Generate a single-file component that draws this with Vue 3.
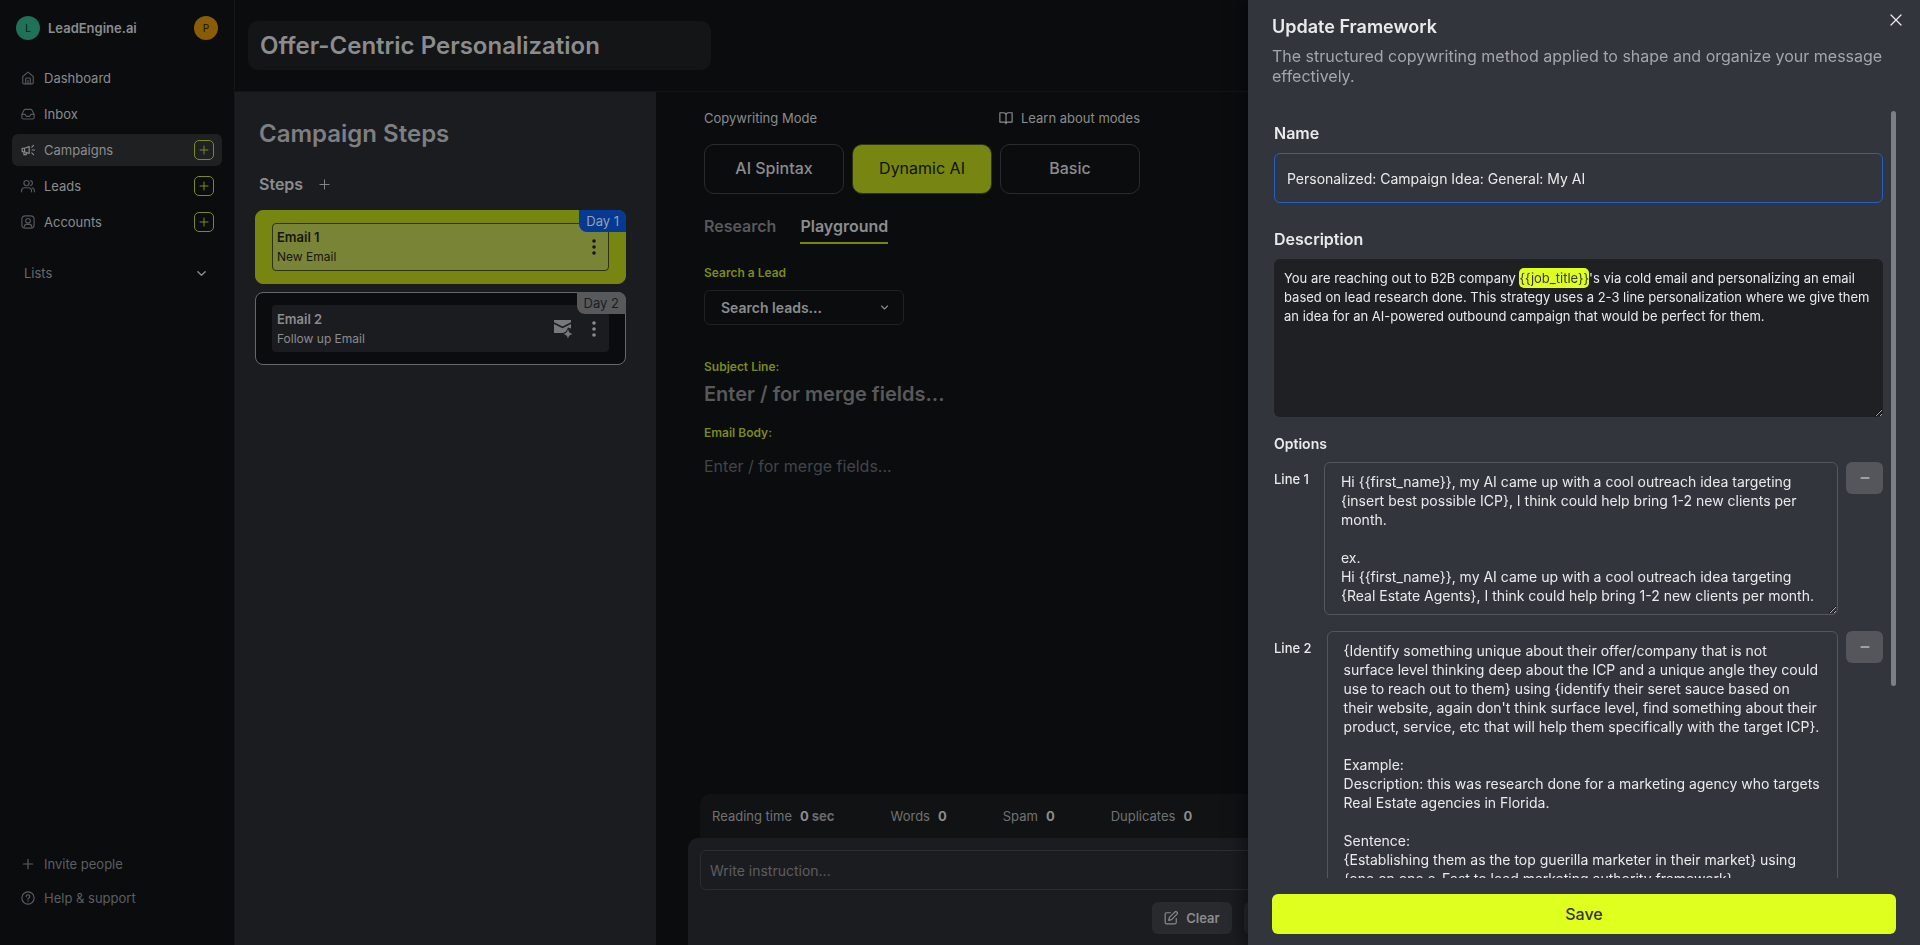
<script setup>
import { ref, computed } from 'vue'

const navItems = [
  { label: 'Dashboard', icon: 'home' },
  { label: 'Inbox', icon: 'inbox' },
  { label: 'Campaigns', icon: 'megaphone', active: true, add: true },
  { label: 'Leads', icon: 'users', add: true },
  { label: 'Accounts', icon: 'account', add: true },
]

const modes = ['AI Spintax', 'Dynamic AI', 'Basic']
const activeMode = ref('Dynamic AI')

const tabs = ['Research', 'Playground']
const activeTab = ref('Playground')

const stats = [
  { label: 'Reading time', value: '0', unit: 'sec' },
  { label: 'Words', value: '0' },
  { label: 'Spam', value: '0' },
  { label: 'Duplicates', value: '0' },
]

const title = ref('Offer-Centric Personalization')
const name = ref('Personalized: Campaign Idea: General: My AI')
const description = ref(
  "You are reaching out to B2B company {{job_title}}'s via cold email and personalizing an email based on lead research done. This strategy uses a 2-3 line personalization where we give them an idea for an AI-powered outbound campaign that would be perfect for them."
)

// merge fields are split out so they can be highlighted
const descriptionParts = computed(() => description.value.split(/(\{\{\w+\}\})/))
const isField = (part) => part.startsWith('{{')

const lines = ref([
  {
    rows: 7,
    text: `Hi {{first_name}}, my AI came up with a cool outreach idea targeting {insert best possible ICP}, I think could help bring 1-2 new clients per month.

ex.
Hi {{first_name}}, my AI came up with a cool outreach idea targeting {Real Estate Agents}, I think could help bring 1-2 new clients per month.`,
  },
  {
    rows: 18,
    text: `{Identify something unique about their offer/company that is not
surface level thinking deep about the ICP and a unique angle they could use to reach out to them} using {identify their seret sauce based on their website, again don't think surface level, find something about their product, service, etc that will help them specifically with the target ICP}.

Example:
Description: this was research done for a marketing agency who targets Real Estate agencies in Florida.

Sentence:
{Establishing them as the top guerilla marketer in their market} using
{one on one e-Fast to lead marketing authority framework}`,
  },
])

const removeLine = (index) => {
  lines.value.splice(index, 1)
}
</script>

<template>
  <div class="app">
    <aside class="sidebar">
      <div class="sidebar__top">
        <span class="avatar avatar--green">L</span>
        <span class="sidebar__brand">LeadEngine.ai</span>
        <span class="avatar avatar--amber">P</span>
      </div>

      <nav class="sidebar__nav">
        <div
          v-for="item in navItems"
          :key="item.label"
          class="nav-item"
          :class="{ 'nav-item--active': item.active }"
        >
          <a href="#" class="nav-item__link">
            <svg class="icon" viewBox="0 0 24 24" aria-hidden="true">
              <template v-if="item.icon === 'home'">
                <path d="M3 9.500 12 2l9 7.500V20a2 2 0 0 1-2 2H5a2 2 0 0 1-2-2z" />
                <path d="M8 22v-8.500A1.500 1.500 0 0 1 9.500 12h5a1.500 1.500 0 0 1 1.500 1.500V22M12 16v6" />
              </template>
              <template v-else-if="item.icon === 'inbox'">
                <path d="M1.500 13 5 5.500A2.500 2.500 0 0 1 7.200 4h9.600A2.500 2.500 0 0 1 19 5.500l3.500 7.500v5a2.500 2.500 0 0 1-2.500 2.500H4A2.500 2.500 0 0 1 1.500 18z" />
                <path d="M1.500 12.500H7l2 3.500h6l2-3.500h5.500" />
              </template>
              <template v-else-if="item.icon === 'megaphone'">
                <path d="M2 9v6h4l8 3V6L6 9zM5 15v5h4v-3.500M6 9v6" />
                <path d="M19 12h4M18.500 7l3-3M18.500 17l3 3" />
              </template>
              <template v-else-if="item.icon === 'users'">
                <circle cx="9.500" cy="7" r="4.500" />
                <path d="M1 22v-2a5 5 0 0 1 5-5h7a5 5 0 0 1 5 5v2M16.500 2.700a4.500 4.500 0 0 1 0 8.600M23 22v-2a5 5 0 0 0-3.500-4.700" />
              </template>
              <template v-else>
                <rect x="1.500" y="1.500" width="21" height="21" rx="6" />
                <circle cx="12" cy="10" r="4" />
                <path d="M5.500 21v-1a4 4 0 0 1 4-4h5a4 4 0 0 1 4 4v1" />
              </template>
            </svg>
            {{ item.label }}
          </a>
          <button v-if="item.add" type="button" class="nav-item__add" :aria-label="`Add ${item.label}`">
            <svg viewBox="0 0 24 24" class="icon icon--plus" aria-hidden="true"><path d="M12 4v16M4 12h16" /></svg>
          </button>
        </div>
      </nav>

      <button type="button" class="sidebar__lists">
        Lists
        <svg class="icon icon--chevron" viewBox="0 0 24 24" aria-hidden="true"><path d="m4 8 8 8 8-8" /></svg>
      </button>

      <div class="sidebar__bottom">
        <a href="#" class="sidebar__util">
          <svg class="icon" viewBox="0 0 24 24" aria-hidden="true"><path d="M12 4v16M4 12h16" /></svg>
          Invite people
        </a>
        <a href="#" class="sidebar__util">
          <svg class="icon" viewBox="0 0 24 24" aria-hidden="true">
            <circle cx="12" cy="12" r="10.500" />
            <path d="M9 9.500a3 3 0 1 1 4.500 2.600c-1 .6-1.500 1-1.500 2M12 17v.5" />
          </svg>
          Help &amp; support
        </a>
      </div>
    </aside>

    <div class="main">
      <header class="main__header">
        <input v-model="title" class="title-input" aria-label="Campaign title" />
      </header>

      <div class="main__body">
        <section class="steps">
          <h1 class="steps__title">Campaign Steps</h1>
          <div class="steps__sub">
            <h2>Steps</h2>
            <button type="button" aria-label="Add step">
              <svg class="icon" viewBox="0 0 24 24" aria-hidden="true"><path d="M12 2v20M2 12h20" /></svg>
            </button>
          </div>

          <article class="step step--active">
            <div class="step__inner">
              <div class="step__text">
                <strong>Email 1</strong>
                <span>New Email</span>
              </div>
              <button type="button" class="step__more" aria-label="Email 1 menu">
                <svg viewBox="0 0 4 16" aria-hidden="true"><circle cx="2" cy="2" r="1.800" /><circle cx="2" cy="8" r="1.800" /><circle cx="2" cy="14" r="1.800" /></svg>
              </button>
            </div>
            <span class="step__day">Day 1</span>
          </article>

          <article class="step">
            <div class="step__inner">
              <div class="step__text">
                <strong>Email 2</strong>
                <span>Follow up Email</span>
              </div>
              <svg class="step__mail" viewBox="0 0 20 20" aria-hidden="true">
                <path d="M1 1h17v2.200L9.500 7.500 1 3.200z" />
                <path d="M1 5l8.500 4.300L18 5v4.500l-3-1-2 4-3 1.500H1z" />
                <path d="M15 10c.8 3.200 1.700 4.200 4.800 5-3.100.8-4 1.700-4.800 4.800-.8-3.100-1.700-4-4.800-4.800 3.100-.8 4-1.800 4.800-5z" />
              </svg>
              <button type="button" class="step__more" aria-label="Email 2 menu">
                <svg viewBox="0 0 4 16" aria-hidden="true"><circle cx="2" cy="2" r="1.800" /><circle cx="2" cy="8" r="1.800" /><circle cx="2" cy="14" r="1.800" /></svg>
              </button>
            </div>
            <span class="step__day">Day 2</span>
          </article>
        </section>

        <section class="editor">
          <div class="editor__content">
            <div class="editor__modes">
              <div class="editor__row">
                <span>Copywriting Mode</span>
                <a href="#" class="editor__learn">
                  <svg class="icon" viewBox="0 0 24 24" aria-hidden="true">
                    <path d="M1.500 3H8a4 4 0 0 1 4 4v15a3 3 0 0 0-3-3H1.500zM22.500 3H16a4 4 0 0 0-4 4v15a3 3 0 0 1 3-3h7.500z" />
                  </svg>
                  Learn about modes
                </a>
              </div>
              <div class="mode-list">
                <button
                  v-for="mode in modes"
                  :key="mode"
                  type="button"
                  class="mode"
                  :class="{ 'mode--active': mode === activeMode }"
                  @click="activeMode = mode"
                >
                  {{ mode }}
                </button>
              </div>
            </div>

            <div class="tabs">
              <button
                v-for="tab in tabs"
                :key="tab"
                type="button"
                class="tab"
                :class="{ 'tab--active': tab === activeTab }"
                @click="activeTab = tab"
              >
                {{ tab }}
              </button>
            </div>

            <label class="field-label" for="lead">Search a Lead</label>
            <div class="lead-select">
              <select id="lead">
                <option>Search leads...</option>
              </select>
              <svg class="icon" viewBox="0 0 24 24" aria-hidden="true"><path d="m4 8 8 8 8-8" /></svg>
            </div>

            <label class="field-label" for="subject">Subject Line:</label>
            <input id="subject" class="subject" placeholder="Enter / for merge fields..." />
            <label class="field-label" for="email-body">Email Body:</label>
            <textarea id="email-body" class="email-body" placeholder="Enter / for merge fields..."></textarea>
          </div>

          <div class="composer-wrap">
            <dl class="stats">
              <div v-for="stat in stats" :key="stat.label" class="stat">
                <dt>{{ stat.label }}</dt>
                <dd>{{ stat.value }} <span v-if="stat.unit">{{ stat.unit }}</span></dd>
              </div>
            </dl>
            <div class="composer">
              <input class="composer__input" placeholder="Write instruction..." aria-label="Instruction" />
              <div class="composer__actions">
                <button type="button" class="composer__btn">
                  <svg class="icon" viewBox="0 0 24 24" aria-hidden="true">
                    <path d="M11 3H4.500A2.500 2.500 0 0 0 2 5.500v14A2.500 2.500 0 0 0 4.500 22h14a2.500 2.500 0 0 0 2.500-2.500V13" />
                    <path d="M18.500 1.800a2.600 2.600 0 0 1 3.700 3.700L13 14.700l-5 1.300 1.300-5z" />
                  </svg>
                  Clear
                </button>
                <button type="button" class="composer__btn composer__btn--wide" aria-label="Generate"></button>
              </div>
            </div>
          </div>
        </section>
      </div>
    </div>

    <aside class="drawer" role="dialog" aria-labelledby="drawer-title">
      <header class="drawer__header">
        <h2 id="drawer-title">Update Framework</h2>
        <p>The structured copywriting method applied to shape and organize your message effectively.</p>
        <button type="button" class="drawer__close" aria-label="Close">
          <svg class="icon" viewBox="0 0 12 12" aria-hidden="true"><path d="m1 1 10 10M11 1 1 11" /></svg>
        </button>
      </header>

      <div class="drawer__body">
        <form id="framework" class="form" @submit.prevent>
          <label class="form__label" for="fw-name">Name</label>
          <input id="fw-name" v-model="name" class="form__input" />

          <label class="form__label" for="fw-description">Description</label>
          <div class="highlight">
            <textarea id="fw-description" v-model="description" class="highlight__field" spellcheck="false"></textarea>
            <div class="highlight__layer" aria-hidden="true">
              <template v-for="(part, i) in descriptionParts" :key="i"><mark v-if="isField(part)">{{ part }}</mark><template v-else>{{ part }}</template></template>
            </div>
          </div>

          <h3 class="form__options">Options</h3>
          <div v-for="(line, index) in lines" :key="index" class="line">
            <label :for="`line-${index}`">Line {{ index + 1 }}</label>
            <textarea :id="`line-${index}`" v-model="line.text" :rows="line.rows" spellcheck="false"></textarea>
            <button type="button" :aria-label="`Remove line ${index + 1}`" @click="removeLine(index)">
              <svg viewBox="0 0 10 10" class="icon" aria-hidden="true"><path d="M1 5h8" /></svg>
            </button>
          </div>
        </form>
        <div class="rail"><div class="rail__thumb"></div></div>
      </div>

      <footer class="drawer__footer">
        <button type="submit" form="framework">Save</button>
      </footer>
    </aside>
  </div>
</template>

<style>
body {
  background: #0a0c0e;
  overflow: hidden;
}
</style>

<style scoped>
.app,
.app * {
  box-sizing: border-box;
}

.app {
  display: flex;
  height: 100vh;
  font-family: Inter, 'Liberation Sans', sans-serif;
  font-size: 13px;
  line-height: 20px;
  color: #8b8c8d;
  background: #0a0c0e;
}

h1,
h2,
h3,
p,
dl,
dd {
  margin: 0;
}

button,
input,
select,
textarea {
  font: inherit;
  color: inherit;
  background: transparent;
  border: 0;
  padding: 0;
  margin: 0;
  outline: 0;
}

a {
  color: inherit;
  text-decoration: none;
}

.icon {
  width: 14px;
  height: 14px;
  flex: none;
  fill: none;
  stroke: currentColor;
  stroke-width: 2;
  stroke-linecap: round;
  stroke-linejoin: round;
}

/* sidebar */
.sidebar {
  flex: none;
  width: 235px;
  display: flex;
  flex-direction: column;
  padding: 16px 12px 37px;
  border-right: 1px solid #141618;
}

.sidebar__top {
  display: flex;
  align-items: center;
  gap: 8px;
  padding: 0 4px;
}

.sidebar__brand {
  flex: 1;
  font-weight: 600;
}

.avatar {
  width: 24px;
  height: 24px;
  border-radius: 50%;
  display: grid;
  place-items: center;
  font-size: 10px;
  color: #0d1512;
}

.avatar--green {
  background: #1f7258;
}

.avatar--amber {
  background: #8a5c07;
}

.sidebar__nav {
  display: grid;
  gap: 4px;
  margin-top: 22px;
}

.nav-item {
  display: flex;
  align-items: center;
  height: 32px;
  padding: 0 8px 0 9px;
  border-radius: 6px;
}

.nav-item--active {
  background: #1e2022;
}

.nav-item__link {
  flex: 1;
  display: flex;
  align-items: center;
  gap: 9px;
}

.nav-item__link .icon {
  color: #55575a;
}

.nav-item--active .icon {
  color: #8b8c8d;
}

.nav-item__add {
  width: 20px;
  height: 20px;
  display: grid;
  place-items: center;
  border: 1px solid #7b8a1c;
  border-radius: 5px;
}

.nav-item .icon--plus {
  width: 12px;
  height: 12px;
  color: #7b8a1c;
}

.sidebar__lists {
  display: flex;
  justify-content: space-between;
  align-items: center;
  margin-top: 25px;
  padding: 0 15px 0 12px;
  color: #68696b;
}

.icon--chevron {
  width: 11px;
  height: 11px;
  stroke-width: 3;
  color: #8b8c8d;
}

.sidebar__bottom {
  margin-top: auto;
  display: grid;
  gap: 14px;
  padding: 0 9px;
  color: #5c5e60;
}

.sidebar__util {
  display: flex;
  align-items: center;
  gap: 9px;
}

/* main area */
.main {
  flex: 1;
  min-width: 0;
  display: flex;
  flex-direction: column;
}

.main__header {
  padding: 21px 13px;
  border-bottom: 1px solid #131517;
}

.title-input {
  display: block;
  width: 463px;
  height: 49px;
  padding: 0 12px;
  border-radius: 10px;
  background: #131517;
  font-size: 24px;
  font-weight: 600;
  color: #8b8c8d;
}

.main__body {
  flex: 1;
  min-height: 0;
  display: flex;
}

.steps {
  flex: none;
  width: 421px;
  padding: 26px 30px 0 20px;
  background: #1b1c20;
}

.steps__title {
  padding-left: 4px;
  font-size: 24px;
  line-height: 32px;
  font-weight: 600;
  color: #7e7f81;
}

.steps__sub {
  display: flex;
  align-items: center;
  gap: 16px;
  margin: 24px 0 16px;
  padding-left: 4px;
}

.steps__sub h2 {
  font-size: 16px;
  font-weight: 600;
}

.steps__sub button {
  display: grid;
}

.steps__sub .icon {
  width: 11px;
  height: 11px;
}

.step {
  position: relative;
  padding: 12px 16px;
  margin-bottom: 8px;
  border: 1px solid #66686a;
  border-radius: 8px;
  background: #0a0c0e;
}

.step--active {
  border-color: #778610;
  background: #778610;
}

.step__inner {
  height: 47px;
  display: flex;
  align-items: center;
  padding: 0 13px 0 5px;
  border-radius: 4px;
  background: #1b1c20;
}

.step--active .step__inner {
  height: 48px;
  border: 1px solid #2d3115;
  background: #7a8437;
  padding: 0 12px 0 4px;
  color: #15170d;
}

.step__text {
  flex: 1;
  display: grid;
  font-size: 12px;
  line-height: 19px;
}

.step__text strong {
  font-size: 13px;
  font-weight: 600;
}

.step__more {
  display: grid;
}

.step__more svg {
  width: 4px;
  height: 16px;
  fill: currentColor;
}

.step__mail {
  width: 20px;
  height: 20px;
  margin-right: 19px;
  fill: #77787a;
}

.step__day {
  position: absolute;
  top: -1px;
  right: -1px;
  padding: 0 7px;
  line-height: 22px;
  border-radius: 0 8px 0 8px;
  background: #58595b;
  color: #1b1c20;
}

.step--active .step__day {
  background: #043a93;
  color: #9a9fa8;
}

/* editor */
.editor {
  flex: 1;
  min-width: 0;
  display: flex;
  flex-direction: column;
  justify-content: space-between;
}

.editor__content {
  padding: 16px 48px 0;
  display: flex;
  flex-direction: column;
  align-items: flex-start;
}

.editor__modes {
  width: 436px;
}

.editor__row {
  display: flex;
  justify-content: space-between;
}

.editor__learn {
  display: flex;
  align-items: center;
  gap: 8px;
}

.mode-list {
  display: grid;
  grid-template-columns: repeat(3, 1fr);
  gap: 8px;
  margin-top: 16px;
}

.mode {
  height: 50px;
  padding-bottom: 2px;
  border: 1px solid #292b2d;
  border-radius: 10px;
  font-size: 16px;
  font-weight: 500;
}

.mode--active {
  border-color: #2e340f;
  background: #778610;
  color: #0f1206;
  font-weight: 400;
}

.tabs {
  display: flex;
  gap: 24px;
  margin-top: 20px;
}

.tab {
  height: 30px;
  padding-bottom: 4px;
  font-size: 16px;
  font-weight: 600;
  color: #58595b;
  border-bottom: 2px solid transparent;
}

.tab--active {
  color: #8b8c8d;
  border-color: #778610;
}

.field-label {
  font-size: 12px;
  line-height: 16px;
  font-weight: 600;
  color: #7b8a1c;
  margin-top: 21px;
}

.lead-select {
  width: 200px;
  height: 35px;
  position: relative;
  margin: 9px 0 13px;
}

.lead-select select {
  appearance: none;
  width: 100%;
  height: 100%;
  padding: 0 16px;
  border: 1px solid #1f2123;
  border-radius: 6px;
  font-size: 14px;
  font-weight: 600;
}

.lead-select .icon {
  position: absolute;
  right: 15px;
  top: 13px;
  width: 9px;
  height: 9px;
  stroke-width: 3;
}

.subject {
  width: 100%;
  height: 28px;
  margin-top: 5px;
  font-size: 20px;
  font-weight: 600;
}

.subject::placeholder {
  color: #58595b;
}

.subject + .field-label {
  margin-top: 17px;
}

.email-body {
  width: 100%;
  height: 120px;
  margin-top: 13px;
  font-size: 16px;
  line-height: 24px;
  resize: none;
}

.email-body::placeholder {
  color: #434547;
}

.composer-wrap {
  padding: 0 32px;
}

.stats {
  display: flex;
  gap: 56px;
  margin: 0 12px;
  padding: 0 12px;
  height: 44px;
  align-items: center;
  border-radius: 10px 10px 0 0;
  background: #101213;
}

.stat {
  display: flex;
  gap: 8px;
  color: #707274;
}

.stat dd {
  font-weight: 700;
  color: #8b8c8d;
}

.stat dd span {
  color: #68696b;
}

.composer {
  padding: 12px 12px 11px;
  border-radius: 10px 10px 0 0;
  background: #1b1c20;
}

.composer__input {
  display: block;
  width: 100%;
  height: 40px;
  padding: 0 9px;
  border: 1px solid #2c2d31;
  border-radius: 6px;
  font-size: 14px;
}

.composer__input::placeholder {
  color: #5c5e60;
}

.composer__actions {
  display: flex;
  justify-content: center;
  gap: 12px;
  margin-top: 12px;
}

.composer__btn {
  display: flex;
  align-items: center;
  justify-content: center;
  gap: 8px;
  width: 80px;
  height: 32px;
  border-radius: 6px;
  background: #292a2e;
  font-weight: 600;
}

.composer__btn--wide {
  width: 180px;
}

/* drawer */
.drawer {
  position: fixed;
  top: 0;
  right: 0;
  bottom: 0;
  width: 35%;
  display: flex;
  flex-direction: column;
  background: #33353c;
  color: #e9eaec;
  box-shadow: -4px 0 16px rgba(0, 0, 0, 0.5);
}

.drawer__header {
  padding: 17px 24px 25px;
}

.drawer__header h2 {
  font-size: 18px;
  font-weight: 600;
}

.drawer__header p {
  margin-top: 9px;
  padding-right: 8px;
  font-size: 16px;
  line-height: 20px;
  color: #a3a6ac;
}

.drawer__close {
  position: absolute;
  top: 14px;
  right: 18px;
  display: grid;
}

.drawer__close .icon {
  width: 12px;
  height: 12px;
  stroke-width: 1.300;
}

.drawer__body {
  flex: 1;
  min-height: 0;
  display: flex;
  gap: 8px;
  padding: 0 24px;
}

.form {
  flex: 1;
  min-width: 0;
  padding: 12px 0 24px 2px;
  overflow-y: auto;
  scrollbar-width: none;
}

.form__label {
  display: block;
  font-size: 16px;
  font-weight: 600;
}

.form__input {
  display: block;
  width: 100%;
  height: 50px;
  margin: 10px 0 26px;
  padding: 0 12px;
  border: 1px solid #2160c4;
  border-radius: 6px;
  font-size: 14px;
}

/* the layer repeats the field's text invisibly, only its marks are painted */
.highlight {
  position: relative;
  margin-top: 10px;
  line-height: 19px;
}

.highlight__field {
  display: block;
  width: 100%;
  height: 158px;
  padding: 10px;
  border-radius: 6px;
  background: #1e2024;
  line-height: 19px;
}

.highlight__layer {
  position: absolute;
  inset: 0;
  padding: 10px;
  visibility: hidden;
  pointer-events: none;
}

.highlight__layer mark {
  visibility: visible;
  padding: 2px 0;
  border-radius: 5px;
  background: #dfff1e;
  color: #33353c;
}

.form__options {
  margin: 17px 0 8px;
  font-size: 14px;
  font-weight: 600;
}

.line {
  display: flex;
  align-items: flex-start;
  margin-bottom: 16px;
}

.line label {
  margin: 7px 15px 0 0;
  font-weight: 500;
}

.line textarea {
  flex: 1;
  min-width: 0;
  padding: 9px 14px 9px 16px;
  border: 1px solid #54565b;
  border-radius: 6px;
  font-size: 14px;
  line-height: 19px;
  overflow: hidden;
}

.line button {
  width: 37px;
  height: 32px;
  margin-left: 8px;
  display: grid;
  place-items: center;
  border-radius: 6px;
  background: #54565b;
}

.line .icon {
  width: 10px;
  height: 10px;
  stroke-width: 1;
}

.rail {
  flex: none;
  width: 5px;
}

.rail__thumb {
  height: 75%;
  border-radius: 3px;
  background: #7d7f86;
}

.drawer__footer {
  padding: 16px 24px 11px;
}

.drawer__footer button {
  display: block;
  width: 100%;
  height: 40px;
  border-radius: 6px;
  background: #dfff1e;
  color: #33353c;
  font-size: 16px;
  font-weight: 500;
}
</style>
